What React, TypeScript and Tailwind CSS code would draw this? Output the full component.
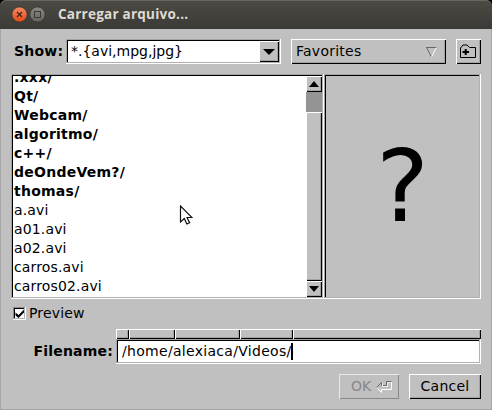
import React from "react";

const RAISED =
  "bg-[#c0c0c0] shadow-[inset_1px_1px_0_#fff,inset_-1px_-1px_0_#000,inset_-2px_-2px_0_#a3a3a3]";
const SUNKEN =
  "shadow-[inset_-1px_-1px_0_#fff,inset_1px_1px_0_#a3a3a3,inset_-2px_-2px_0_#b0b0b0,inset_2px_2px_0_#000]";

const folders = [".xxx/", "Qt/", "Webcam/", "algoritmo/", "c++/", "deOndeVem?/", "thomas/"];
const files = ["a.avi", "a01.avi", "a02.avi", "carros.avi", "carros02.avi"];
const segments = ["w-[13px]", "w-[46px]", "w-[65px]", "w-[53px]", "flex-1"];

function TitleBar() {
  return (
    <div className="flex h-[29px] items-center rounded-t-[6px] bg-linear-to-b from-[#4b4a45] to-[#3b3a36] pl-[11px] shadow-[inset_0_1px_0_#686761]">
      <svg width="35" height="17" viewBox="0 0 35 17" className="shrink-0">
        <defs>
          <linearGradient id="close" x2="0" y2="1">
            <stop offset="0" stopColor="#f58b61" />
            <stop offset="1" stopColor="#df4a16" />
          </linearGradient>
          <linearGradient id="max" x2="0" y2="1">
            <stop offset="0" stopColor="#8b8981" />
            <stop offset="1" stopColor="#65645e" />
          </linearGradient>
        </defs>
        <circle cx="8.5" cy="8.5" r="7.6" fill="url(#close)" stroke="#33322e" strokeWidth=".7" />
        <path d="M6 6l5 5M11 6l-5 5" stroke="#482316" strokeWidth="1.3" />
        <circle cx="26.5" cy="8.5" r="7.6" fill="url(#max)" stroke="#33322e" strokeWidth=".7" />
        <rect x="23.5" y="5.5" width="6" height="6" fill="none" stroke="#3b3a36" />
      </svg>
      <span className="mt-px ml-[12px] font-['Open_Sans','Noto_Sans',sans-serif] text-[13.5px] leading-none font-bold tracking-[0.24px] text-[#dfdbd2]">
        Carregar arquivo...
      </span>
    </div>
  );
}

function Scrollbar() {
  return (
    <div className="flex w-4 flex-col bg-[#949494]">
      <div className={`${RAISED} flex h-4 items-center justify-center`}>
        <svg width="10" height="6" viewBox="0 0 10 6"><path d="M0 6L5 0l5 6z" /></svg>
      </div>
      <div className="h-5" />
      <div className={`${RAISED} flex-1`} />
      <div className={`${RAISED} flex h-4 items-center justify-center`}>
        <svg width="10" height="6" viewBox="0 0 10 6"><path d="M0 0L5 6l5-6z" /></svg>
      </div>
    </div>
  );
}

export default function App() {
  return (
    <div className="relative h-[410px] w-[492px] overflow-hidden bg-black font-['DejaVu_Sans',sans-serif] text-[14px] leading-[19px] text-black">
      <TitleBar />
      <div className="h-[381px] border-x border-b border-[#a5a5a5] bg-[#c0c0c0] pt-[10px] pr-[10px] pl-[10px]">
        <div className="flex h-[25px] items-center">
          <span className="w-[55px] pl-[3px] font-bold tracking-[0.2px]">Show:</span>
          <div className={`${SUNKEN} flex h-[25px] w-[215px] bg-white p-[2px]`}>
            <span className="flex-1 pt-px pl-[3px]">*.&#123;avi,mpg,jpg&#125;</span>
            <div className={`${RAISED} flex w-5 items-center justify-center`}>
              <svg width="12" height="6" viewBox="0 0 12 6"><path d="M0 0L6 6l6-6z" /></svg>
            </div>
          </div>
          <div className={`${RAISED} ml-[10px] flex h-[25px] w-[155px] items-center justify-between pr-[9px] pl-[5px]`}>
            <span className="tracking-[0.25px]">Favorites</span>
            <svg width="11" height="12" viewBox="0 0 11 12" fill="none">
              <path d="M.5 1.5L5.5 11M0 1.5h11" stroke="#686868" />
              <path d="M10.5 1.5L5.5 11" stroke="#fff" />
            </svg>
          </div>
          <div className={`${RAISED} ml-[10px] flex size-[25px] items-center justify-center`}>
            <svg width="17" height="15" viewBox="0 0 17 15" fill="none" stroke="#000">
              <path d="M.5 13.5V4l2.5-3h4l2.5 2.5h6v10z" />
              <path d="M2.5 8H9M5.7 5v6" strokeWidth="2" />
            </svg>
          </div>
        </div>

        <div className="mt-[10px] flex h-[225px]">
          <div className={`${SUNKEN} flex w-[313px] bg-white p-[2px]`}>
            <div className="flex-1 overflow-hidden">
              <ul className="-mt-[8px] pl-px">
                {folders.map((name) => (
                  <li key={name} className="font-bold tracking-[0.25px]">{name}</li>
                ))}
                {files.map((name) => (
                  <li key={name} className="tracking-[0.15px]">{name}</li>
                ))}
              </ul>
            </div>
            <Scrollbar />
          </div>
          <div className={`${SUNKEN} flex w-[157px] items-center justify-center text-[100px] leading-none`}>
            <span>?</span>
          </div>
        </div>

        <div className="mt-[5px] flex h-[19px] items-center pl-[2px]">
          <div className="flex size-[13px] items-center justify-center bg-white shadow-[inset_-1px_-1px_0_#fff,inset_1px_1px_0_#888,inset_-2px_-2px_0_#b0b0b0,inset_2px_2px_0_#000]">
            <svg width="9" height="9" viewBox="0 0 9 9">
              <path d="M.5 3.5v3L3.5 9 9 3.5v-3L3.5 6z" />
            </svg>
          </div>
          <span className="ml-[3px] tracking-[0.15px]">Preview</span>
        </div>

        <div className="mt-[6px] flex">
          <span className="mt-[13px] w-[105px] pr-[3px] text-right font-bold tracking-[0.2px]">Filename:</span>
          <div className="w-[365px]">
            <div className="flex h-[10px]">
              {segments.map((width) => (
                <div key={width} className={`${RAISED} ${width}`} />
              ))}
            </div>
            <div className={`${SUNKEN} flex h-[25px] items-center bg-white pl-[6px]`}>
              <span className="tracking-[0.3px]">/home/alexiaca/Videos/</span>
              <span className="-ml-px h-[17px] w-[2px] bg-black" />
            </div>
          </div>
        </div>

        <div className="mt-[10px] flex h-[25px] justify-end gap-[10px]">
          <div className="flex w-[60px] items-center bg-[#c0c0c0] pl-[12px] text-[#888] shadow-[inset_1px_1px_0_#e8e8e8,inset_-1px_-1px_0_#888]">
            <span>OK</span>
            <svg className="ml-[5px]" width="17" height="12" viewBox="0 0 17 12" fill="none">
              <path d="M5.5 11.5v-3h10v-8M.8 6.5l4.7 5" stroke="#fff" />
              <path d="M.8 6.5L5.5 1.5v3h5v-4h5" stroke="#666" />
              <path d="M6.5 2v3.5h5v-4h3" stroke="#eee" />
            </svg>
          </div>
          <div className={`${RAISED} flex w-[72px] items-center justify-center tracking-[0.25px]`}>Cancel</div>
        </div>
      </div>

      <svg className="absolute top-[205px] left-[179px]" width="14" height="22" viewBox="0 0 14 22">
        <path d="M1.5 1v16l3.8-3.4 2.5 5.4 2.8-1.3L8 12.5h5z" fill="#fff" stroke="#111" strokeWidth="1.2" />
      </svg>
    </div>
  );
}
